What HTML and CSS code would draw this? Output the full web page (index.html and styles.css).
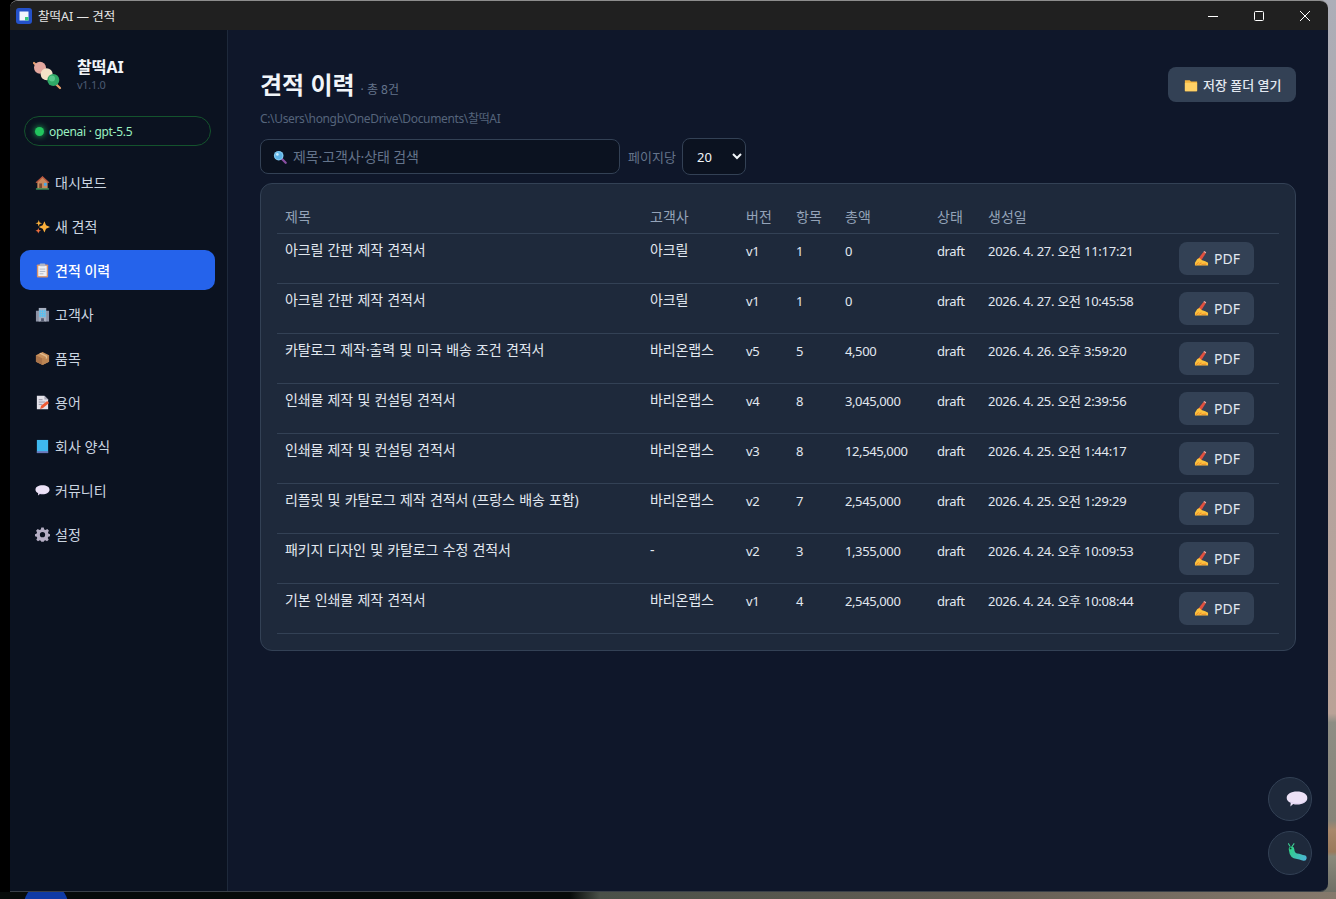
FILE: index.html
```html
<!DOCTYPE html>
<html lang="ko">
<head>
<meta charset="utf-8">
<title>찰떡AI — 견적</title>
<link rel="stylesheet" href="styles.css">
</head>
<body>
<svg class="defs" width="0" height="0" aria-hidden="true">
  <symbol id="i-hand" viewBox="0 0 16 16">
    <path d="M3.500 9.500 10 1 12.500 2.500 7.500 10.500Z" fill="#e0503f"/>
    <path d="M10 1 11 0 13 1.200 12.500 2.500Z" fill="#f7b0a0"/>
    <path d="M1 15.500V12.500L3.500 8.500 6 7.500 8 9.500 12 11 15 12.500 15 15.500Z" fill="#fcc23d"/>
    <path d="M2 15 5 12M5 14.500 8 12.500M8 14.500 13 14" stroke="#ee8f2e" stroke-width="1.100" fill="none"/>
  </symbol>
  <symbol id="i-balloon" viewBox="0 0 16 16">
    <path d="M8 2.500C12.400 2.500 15.500 4.400 15.500 7.200S12.400 12 8 12C7 12 6 11.900 5.200 11.600L3.200 13.400 3.400 10.800C1.600 10 .5 8.700.5 7.200.5 4.400 3.600 2.500 8 2.500Z" fill="#ede2f7"/>
    <path d="M3 9.500C4.500 11 7 11.400 9 11.300 11.500 11.200 13.500 10.300 14.800 8.800 13.500 12 4.500 12.500 3 9.500Z" fill="#c9b3e6"/>
  </symbol>
</svg>

<div class="taskbar-blob"></div>
<div class="desktop">
  <div class="window">
    <header class="titlebar">
      <svg class="app-icon" viewBox="0 0 16 16"><rect width="16" height="16" rx="3" fill="#2451c9"/><rect x="3.500" y="3.500" width="9" height="9" fill="#f1f5fb"/><rect x="9" y="9" width="3.500" height="3.500" fill="#35c97c"/></svg>
      <span class="window-title">찰떡AI — 견적</span>
      <div class="window-controls">
        <svg class="ctl" viewBox="0 0 46 30"><path d="M18 15.500H28" stroke="#fff" stroke-width="1"/></svg>
        <svg class="ctl" viewBox="0 0 46 30"><rect x="18.500" y="10.500" width="9" height="9" rx="1" fill="none" stroke="#fff" stroke-width="1"/></svg>
        <svg class="ctl" viewBox="0 0 46 30"><path d="M18 10 28 20M28 10 18 20" stroke="#fff" stroke-width="1"/></svg>
      </div>
    </header>
    <div class="app">
      <aside class="sidebar">
        <div class="brand">
          <svg class="logo" viewBox="0 0 30 32">
            <path d="M1 5 27 30" stroke="#e8a06c" stroke-width="2.200" stroke-linecap="round"/>
            <circle cx="7" cy="9.700" r="6" fill="#e3a79e"/>
            <circle cx="13.700" cy="16.300" r="6" fill="#f3e2c8"/>
            <circle cx="20.300" cy="22" r="6" fill="#2fa866"/>
            <circle cx="19" cy="20.500" r="3" fill="#58c98c"/>
          </svg>
          <div>
            <div class="brand-name">찰떡AI</div>
            <div class="brand-version">v1.1.0</div>
          </div>
        </div>
        <div class="status-pill"><span class="status-dot"></span><span>openai · gpt-5.5</span></div>
        <nav class="nav">
          <a class="nav-item">
            <svg class="nav-icon" viewBox="0 0 16 16"><path d="M1 8 8 1.500 15 8 13.500 8V14.500H2.500V8Z" fill="#c98a5e"/><path d="M.5 8 8 1 15.500 8 14 8.500 8 3 2 8.500Z" fill="#b5533c"/><rect x="4.500" y="9" width="3" height="5.500" fill="#7a4a32"/><rect x="9.500" y="8.500" width="3" height="3" fill="#4aa8e8"/><rect x="1" y="14.300" width="14" height="1.200" fill="#4fb56b"/></svg>
            대시보드
          </a>
          <a class="nav-item">
            <svg class="nav-icon" viewBox="0 0 16 16"><path d="M10 2.500 11.800 6.700 16 8.500 11.800 10.300 10 14.500 8.200 10.300 4 8.500 8.200 6.700Z" fill="#fbb03b"/><path d="M4 1 4.900 3.600 7.500 4.500 4.900 5.400 4 8 3.100 5.400.5 4.500 3.100 3.600Z" fill="#fbb03b"/><path d="M3.500 9.500 4.300 11.700 6.500 12.500 4.300 13.300 3.500 15.500 2.700 13.300.5 12.500 2.700 11.700Z" fill="#f2703f"/></svg>
            새 견적
          </a>
          <a class="nav-item is-active">
            <svg class="nav-icon" viewBox="0 0 16 16"><rect x="2" y="1.500" width="12" height="14" rx="1" fill="#d9946a"/><rect x="3.500" y="3" width="9" height="11" fill="#eef0f5"/><rect x="5" y=".5" width="6" height="3" rx="1" fill="#aeb6c6"/><path d="M5 6.500H11M5 9H11M5 11.500H9" stroke="#aeb6c6"/></svg>
            견적 이력
          </a>
          <a class="nav-item">
            <svg class="nav-icon" viewBox="0 0 16 16"><rect x="1" y="4" width="4" height="11.500" fill="#8d93a6"/><rect x="11" y="4" width="4" height="11.500" fill="#8d93a6"/><rect x="4" y="1" width="8" height="14.500" fill="#a9afc0"/><path d="M5.500 3V11M8 3V11M10.500 3V11M4.500 4.500H11.500M4.500 7H11.500M4.500 9.500H11.500" stroke="#5cc0ee" stroke-width="1.200"/><rect x="6.500" y="12" width="3" height="3.500" fill="#565c70"/></svg>
            고객사
          </a>
          <a class="nav-item">
            <svg class="nav-icon" viewBox="0 0 16 16"><path d="M8 1 15 4.500V11.500L8 15 1 11.500V4.500Z" fill="#c8905c"/><path d="M1 4.500 8 8V15L1 11.500Z" fill="#a9734a"/><path d="M8 8 15 4.500V11.500L8 15Z" fill="#bc8553"/><path d="M4.500 2.700 11.500 6.200V8.500L13 7.700V5.400L6 1.900Z" fill="#e3bc8e"/></svg>
            품목
          </a>
          <a class="nav-item">
            <svg class="nav-icon" viewBox="0 0 16 16"><path d="M2 .8H10L14 4.800V15.200H2Z" fill="#e4e2ea"/><path d="M10 .8V4.800H14Z" fill="#a9a6b5"/><path d="M4 5H8M4 7.500H11M4 10H8" stroke="#9391a2"/><path d="M5.500 14.800 6.500 11.500 13 6.500 15 8.500 8.500 13.800Z" fill="#ef5a32"/></svg>
            용어
          </a>
          <a class="nav-item">
            <svg class="nav-icon" viewBox="0 0 16 16"><rect x="2" y="1" width="12" height="14" fill="#3fb8ee"/><rect x="2" y="13" width="12" height="2" fill="#6d75b8"/></svg>
            회사 양식
          </a>
          <a class="nav-item">
            <svg class="nav-icon"><use href="#i-balloon"/></svg>
            커뮤니티
          </a>
          <a class="nav-item">
            <svg class="nav-icon" viewBox="0 0 16 16"><path fill="#b5aec4" fill-rule="evenodd" d="M6.700 .5H9.300L9.800 2.600 11.300 3.200 13.100 2.100 14.900 3.900 13.800 5.700 14.400 7.200 16 7.700V9.900L14.200 10.400 13.600 11.800 14.600 13.700 12.800 15.300 11.100 14.200 9.800 14.700 9.300 15.800H6.700L6.200 14.700 4.900 14.200 3.200 15.300 1.400 13.700 2.400 11.800 1.800 10.400 0 9.900V7.700L1.600 7.200 2.200 5.700 1.100 3.900 2.900 2.100 4.700 3.200 6.200 2.600ZM8 5.400A2.800 2.800 0 1 0 8 11 2.800 2.800 0 1 0 8 5.400Z"/></svg>
            설정
          </a>
        </nav>
      </aside>
      <main class="main">
        <div class="page-head">
          <div>
            <div class="title-row">
              <h1 class="page-title">견적 이력</h1>
              <span class="page-count">· 총 8건</span>
            </div>
            <div class="page-path">C:\Users\hongb\OneDrive\Documents\찰떡AI</div>
          </div>
          <button class="btn btn-folder">
            <svg class="btn-icon" viewBox="0 0 16 16"><path d="M1 2.500H6.500L8 4H15V15H1Z" fill="#f5b53f"/><rect x="1" y="5.500" width="14" height="9.500" rx=".8" fill="#ffd166"/></svg>
            저장 폴더 열기
          </button>
        </div>
        <div class="filters">
          <div class="search">
            <svg class="search-icon" viewBox="0 0 16 16"><path d="M10 10 14.500 14.500" stroke="#8a4fa3" stroke-width="2.600" stroke-linecap="round"/><circle cx="6.500" cy="6.500" r="5.500" fill="#7fc8ef"/><circle cx="6.500" cy="6.500" r="4" fill="#5db2e6"/><circle cx="5" cy="5" r="1.500" fill="#c9ecff"/></svg>
            <span class="search-text">제목·고객사·상태 검색</span>
          </div>
          <label class="per-page-label" for="perPage">페이지당</label>
          <select class="per-page" id="perPage"><option>20</option><option>50</option><option>100</option></select>
        </div>
        <section class="card">
          <table class="table">
            <colgroup>
              <col class="c-title"><col class="c-client"><col class="c-ver"><col class="c-items"><col class="c-total"><col class="c-status"><col class="c-date"><col class="c-action">
            </colgroup>
            <thead>
              <tr><th>제목</th><th>고객사</th><th>버전</th><th>항목</th><th>총액</th><th>상태</th><th>생성일</th><th></th></tr>
            </thead>
            <tbody>
              <tr><td class="ko">아크릴 간판 제작 견적서</td><td class="ko">아크릴</td><td class="num">v1</td><td class="num">1</td><td class="num">0</td><td class="num">draft</td><td class="date">2026. 4. 27. 오전 11:17:21</td><td><button class="btn btn-pdf"><svg class="pdf-icon"><use href="#i-hand"/></svg>PDF</button></td></tr>
              <tr><td class="ko">아크릴 간판 제작 견적서</td><td class="ko">아크릴</td><td class="num">v1</td><td class="num">1</td><td class="num">0</td><td class="num">draft</td><td class="date">2026. 4. 27. 오전 10:45:58</td><td><button class="btn btn-pdf"><svg class="pdf-icon"><use href="#i-hand"/></svg>PDF</button></td></tr>
              <tr><td class="ko">카탈로그 제작·출력 및 미국 배송 조건 견적서</td><td class="ko">바리온랩스</td><td class="num">v5</td><td class="num">5</td><td class="num">4,500</td><td class="num">draft</td><td class="date">2026. 4. 26. 오후 3:59:20</td><td><button class="btn btn-pdf"><svg class="pdf-icon"><use href="#i-hand"/></svg>PDF</button></td></tr>
              <tr><td class="ko">인쇄물 제작 및 컨설팅 견적서</td><td class="ko">바리온랩스</td><td class="num">v4</td><td class="num">8</td><td class="num">3,045,000</td><td class="num">draft</td><td class="date">2026. 4. 25. 오전 2:39:56</td><td><button class="btn btn-pdf"><svg class="pdf-icon"><use href="#i-hand"/></svg>PDF</button></td></tr>
              <tr><td class="ko">인쇄물 제작 및 컨설팅 견적서</td><td class="ko">바리온랩스</td><td class="num">v3</td><td class="num">8</td><td class="num">12,545,000</td><td class="num">draft</td><td class="date">2026. 4. 25. 오전 1:44:17</td><td><button class="btn btn-pdf"><svg class="pdf-icon"><use href="#i-hand"/></svg>PDF</button></td></tr>
              <tr><td class="ko">리플릿 및 카탈로그 제작 견적서 (프랑스 배송 포함)</td><td class="ko">바리온랩스</td><td class="num">v2</td><td class="num">7</td><td class="num">2,545,000</td><td class="num">draft</td><td class="date">2026. 4. 25. 오전 1:29:29</td><td><button class="btn btn-pdf"><svg class="pdf-icon"><use href="#i-hand"/></svg>PDF</button></td></tr>
              <tr><td class="ko">패키지 디자인 및 카탈로그 수정 견적서</td><td class="ko">-</td><td class="num">v2</td><td class="num">3</td><td class="num">1,355,000</td><td class="num">draft</td><td class="date">2026. 4. 24. 오후 10:09:53</td><td><button class="btn btn-pdf"><svg class="pdf-icon"><use href="#i-hand"/></svg>PDF</button></td></tr>
              <tr><td class="ko">기본 인쇄물 제작 견적서</td><td class="ko">바리온랩스</td><td class="num">v1</td><td class="num">4</td><td class="num">2,545,000</td><td class="num">draft</td><td class="date">2026. 4. 24. 오후 10:08:44</td><td><button class="btn btn-pdf"><svg class="pdf-icon"><use href="#i-hand"/></svg>PDF</button></td></tr>
            </tbody>
          </table>
        </section>
        <button class="fab fab-chat"><svg class="fab-icon"><use href="#i-balloon"/></svg></button>
        <button class="fab fab-bug">
          <svg class="fab-icon" viewBox="0 0 24 24"><defs><linearGradient id="bugGrad" gradientUnits="userSpaceOnUse" x1="4" y1="6" x2="22" y2="19"><stop offset="0" stop-color="#2ed184"/><stop offset="1" stop-color="#4cb4d8"/></linearGradient></defs><path d="M4.500 5 2.500 1.500M6.500 5 9 1.500" stroke="#3ecf94" stroke-width="1.100" fill="none"/><path d="M6 8C6.500 13 9 15.500 12 15.500 15 15.500 16 17 19.500 17.500" stroke="url(#bugGrad)" stroke-width="6" stroke-linecap="round" fill="none"/><circle cx="5" cy="7" r="1" fill="#0b3a2a"/></svg>
        </button>
      </main>
    </div>
  </div>
</div>
</body>
</html>
```
FILE: styles.css
```css
* { box-sizing: border-box; }
html, body { margin: 0; height: 899px; overflow: hidden; }
body {
  position: relative;
  background: linear-gradient(90deg, #070b0a 0, #070b0a 570px, #4a5048 600px, #665f55 1000px, #85796c 1336px);
  color-scheme: dark;
  font-family: "Noto Sans", "Noto Sans CJK KR", sans-serif;
  color: #e2e8f0;
}
.defs { position: absolute; }
.taskbar-blob {
  position: absolute;
  left: 24px;
  top: 883px;
  width: 44px;
  height: 44px;
  border-radius: 50%;
  background: #0f3aa5;
}
.desktop {
  position: relative;
  height: 892px;
  padding-left: 10px;
  background:
    linear-gradient(180deg, #acaeb8 0%, #b0a5a4 30%, #b9a297 80%, #8d8d84 81%, #878478 92%, #a8886c 93%, #9a7a5c 95.500%, #8a8a7c 96%, #6f6f66 100%) right top / 20px 100% no-repeat,
    #000;
}
.window {
  width: 1318px;
  height: 892px;
  display: flex;
  flex-direction: column;
  border-radius: 8px 8px 8px 0;
  overflow: hidden;
  border-top: 1px solid #8d8d8d;
  border-bottom: 1px solid #3a4048;
  position: relative;
}
.titlebar { height: 29px; flex: none; display: flex; align-items: center; background: #202020; padding-left: 6px; }
.app-icon { width: 16px; height: 16px; }
.window-title { margin-left: 6px; font-size: 12.500px; color: #e6e6e6; }
.window-controls { margin-left: auto; display: flex; }
.ctl { width: 46px; height: 30px; display: block; }
.app { flex: 1; display: flex; min-height: 0; }

.sidebar { width: 218px; flex: none; background: #0b1220; border-right: 1px solid #1e293b; padding: 0 12px 0 10px; }
.brand { display: flex; align-items: flex-start; height: 86px; padding: 28px 0 0 13px; gap: 14px; }
.logo { width: 30px; height: 32px; }
.brand-name { font-size: 16px; font-weight: 700; color: #f1f5f9; line-height: 18px; }
.brand-version { font-size: 11px; letter-spacing: -.3px; color: #4b5a72; line-height: 16px; margin-top: 1px; }
.status-pill {
  margin: 0 4px; height: 30px; display: flex; align-items: center; gap: 5px; padding-left: 10px;
  border: 1px solid #14532d; border-radius: 15px; font-size: 12px; letter-spacing: -.3px; color: #9af0c0; background: #0b1220;
}
.status-dot { width: 9px; height: 9px; border-radius: 50%; background: #22c55e; box-shadow: 0 0 6px #22c55e; }
.nav { display: flex; flex-direction: column; gap: 4px; margin-top: 16px; }
.nav-item {
  height: 40px; display: flex; align-items: center; gap: 5px; padding-left: 15px; border-radius: 10px;
  font-size: 14px; color: #cbd5e1;
}
.nav-item.is-active { background: #2563eb; color: #fff; font-weight: 500; }
.nav-icon { width: 15px; height: 15px; flex: none; }

.main { flex: 1; position: relative; background: #0f172a; padding: 37px 32px 0 32px; }
.page-head { display: flex; justify-content: space-between; align-items: flex-start; }
.title-row { display: flex; align-items: baseline; gap: 6px; height: 36px; }
.page-title { margin: 0; font-size: 24px; line-height: 36px; font-weight: 700; color: #f1f5f9; }
.page-count { font-size: 12px; color: #64748b; }
.page-path { font-size: 12px; letter-spacing: -.35px; color: #55647b; margin-top: 7px; line-height: 18px; }
.btn { border: 0; font-family: inherit; background: #334155; color: #e2e8f0; display: inline-flex; align-items: center; }
.btn-folder { height: 35px; width: 128px; border-radius: 8px; padding-left: 16px; gap: 5px; font-size: 13px; font-weight: 500; }
.btn-icon { width: 14px; height: 14px; }
.filters { display: flex; align-items: center; margin-top: 10px; height: 37px; }
.search {
  width: 360px; height: 35px; display: flex; align-items: center; gap: 6px; padding: 0 0 2px 12px;
  background: #0b1220; border: 1px solid #334155; border-radius: 8px;
}
.search-icon { width: 14px; height: 14px; margin-top: 2px; }
.search-text { font-size: 14px; letter-spacing: -.1px; color: #64748b; }
.per-page-label { margin-left: 8px; font-size: 13px; color: #64748b; width: 54px; }
.per-page {
  width: 64px; height: 37px; padding: 0 8px 0 10px; font-family: inherit; font-size: 13px;
  background: #0b1220; color: #f1f5f9; border: 1px solid #334155; border-radius: 8px;
}
.card {
  margin-top: 8px; height: 468px; padding: 16px; background: #1e293b; border: 1px solid #334155; border-radius: 12px;
}
.table { width: 1002px; table-layout: fixed; border-collapse: collapse; }
.c-title { width: 365px; } .c-client { width: 96px; } .c-ver { width: 50px; } .c-items { width: 49px; }
.c-total { width: 92px; } .c-status { width: 51px; } .c-date { width: 191px; } .c-action { width: 108px; }
.table th {
  height: 33px; padding: 0 8px; text-align: left; font-size: 14px; font-weight: 400; color: #94a3b8;
  border-bottom: 1px solid #334155; vertical-align: middle;
}
.table td {
  height: 50px; padding: 8px; vertical-align: top; line-height: 18px; color: #e2e8f0;
  border-bottom: 1px solid #334155; white-space: nowrap; overflow: hidden;
}
.table td.ko { font-size: 14px; letter-spacing: -.12px; word-spacing: .8px; line-height: 16px; }
.table td.num { font-size: 13px; letter-spacing: -.4px; }
.table td.date { font-size: 13px; letter-spacing: -.25px; }
.btn-pdf { height: 33px; width: 75px; border-radius: 8px; padding-left: 15px; gap: 5px; font-size: 14px; }
.pdf-icon { width: 15px; height: 15px; flex: none; }
.fab {
  position: absolute; right: 16px; width: 44px; height: 44px; padding: 0; border-radius: 50%;
  background: #1e293b; border: 1px solid #334155; display: flex; align-items: center; justify-content: center;
}
.fab-chat { bottom: 70px; }
.fab-bug { bottom: 16px; }
.fab-icon { width: 22px; height: 22px; transform: translateX(7px); }
```
